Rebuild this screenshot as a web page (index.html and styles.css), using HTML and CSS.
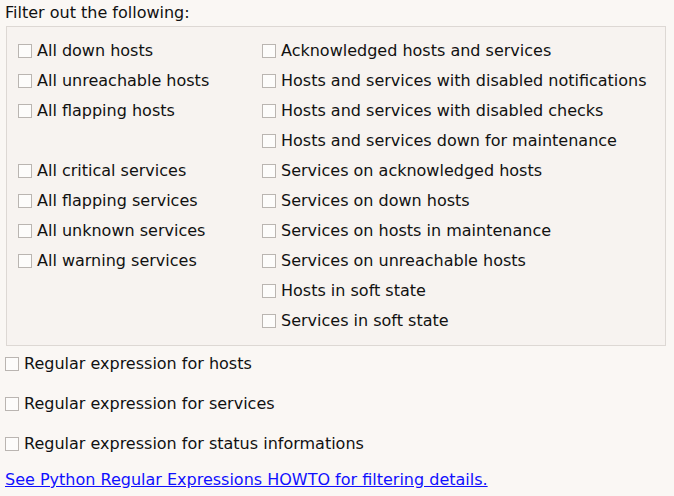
FILE: index.html
```html
<!DOCTYPE html>
<html>
<head>
<meta charset="utf-8">
<link rel="stylesheet" href="styles.css">
</head>
<body>
<div class="title">Filter out the following:</div>
<div class="frame">
  <div class="col col-left">
    <label class="opt"><span class="box"></span>All down hosts</label>
    <label class="opt"><span class="box"></span>All unreachable hosts</label>
    <label class="opt"><span class="box"></span>All flapping hosts</label>
    <div class="opt spacer"></div>
    <label class="opt"><span class="box"></span>All critical services</label>
    <label class="opt"><span class="box"></span>All flapping services</label>
    <label class="opt"><span class="box"></span>All unknown services</label>
    <label class="opt"><span class="box"></span>All warning services</label>
  </div>
  <div class="col col-right">
    <label class="opt"><span class="box"></span>Acknowledged hosts and services</label>
    <label class="opt"><span class="box"></span>Hosts and services with disabled notifications</label>
    <label class="opt"><span class="box"></span>Hosts and services with disabled checks</label>
    <label class="opt"><span class="box"></span>Hosts and services down for maintenance</label>
    <label class="opt"><span class="box"></span>Services on acknowledged hosts</label>
    <label class="opt"><span class="box"></span>Services on down hosts</label>
    <label class="opt"><span class="box"></span>Services on hosts in maintenance</label>
    <label class="opt"><span class="box"></span>Services on unreachable hosts</label>
    <label class="opt"><span class="box"></span>Hosts in soft state</label>
    <label class="opt"><span class="box"></span>Services in soft state</label>
  </div>
</div>
<div class="regex">
  <label class="ropt"><span class="box"></span>Regular expression for hosts</label>
  <label class="ropt"><span class="box"></span>Regular expression for services</label>
  <label class="ropt"><span class="box"></span>Regular expression for status informations</label>
</div>
<a class="link" href="#">See Python Regular Expressions HOWTO for filtering details.</a>
</body>
</html>
```
FILE: styles.css
```css
html, body {
  margin: 0;
  padding: 0;
  background: #faf7f4;
}
body {
  font-family: "DejaVu Sans", sans-serif;
  font-size: 16px;
  color: #111111;
  width: 674px;
  height: 496px;
  overflow: hidden;
}
.title {
  height: 26px;
  line-height: 26px;
  padding-left: 5px;
}
.frame {
  margin-left: 6px;
  width: 660px;
  height: 320px;
  box-sizing: border-box;
  border: 1px solid #ddd8d4;
  background: #f7f3f0;
  display: flex;
  padding: 8px 0 0 11px;
}
.col {
  display: flex;
  flex-direction: column;
}
.col-left {
  width: 244px;
}
.opt {
  height: 30px;
  display: flex;
  align-items: center;
  white-space: nowrap;
}
.box {
  display: inline-block;
  width: 14px;
  height: 14px;
  box-sizing: border-box;
  border: 1px solid #bab5b1;
  background: #fdfcfb;
  margin-right: 5px;
  margin-top: 2px;
  flex: none;
}
.regex {
  display: flex;
  flex-direction: column;
  gap: 10px;
  padding-left: 5px;
  margin-top: 2px;
}
.ropt {
  height: 30px;
  display: flex;
  align-items: center;
  white-space: nowrap;
}
.link {
  display: block;
  margin-top: 12px;
  margin-left: 5px;
  height: 20px;
  line-height: 20px;
  color: #1010ff;
  text-decoration: underline;
  white-space: nowrap;
}
```
